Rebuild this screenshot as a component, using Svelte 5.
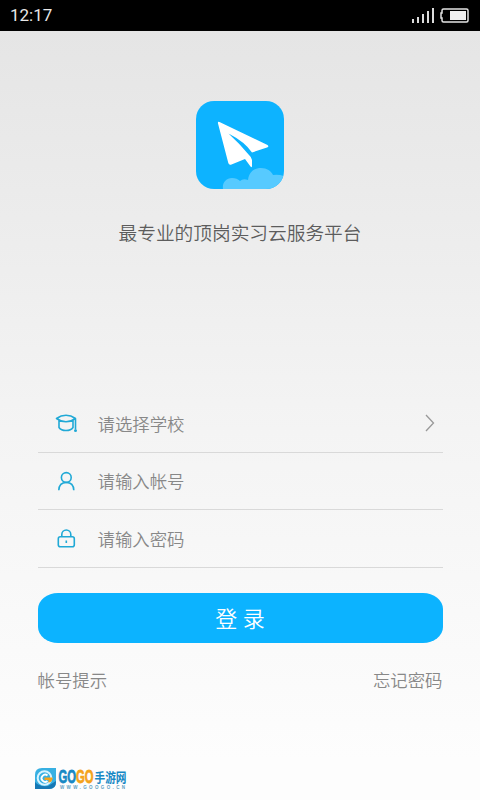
<script lang="ts">
  const signalBars = [4, 6, 9, 12, 15];

  // Login form rows
  const fields = [
    { id: 'school', hint: '请选择学校', arrow: true },
    { id: 'account', hint: '请输入帐号', arrow: false },
    { id: 'password', hint: '请输入密码', arrow: false }
  ];

  function login() {
    // Here you would send the credentials to the backend
    console.log('Login');
  }
</script>

<div class="screen">
  <header class="status-bar">
    <span class="clock">12:17</span>
    <div class="status-icons">
      <div class="signal">
        {#each signalBars as height}
          <i style="height: {height}px"></i>
        {/each}
      </div>
      <svg class="battery" width="29" height="15" viewBox="0 0 29 15">
        <path d="M3.5 1H26.5Q28 1 28 2.5V12.5Q28 14 26.5 14H3.5Q2 14 2 12.5V10H1V5H2V2.5Q2 1 3.5 1Z" fill="none" stroke="#e4e4e4" stroke-width="1.5" />
        <rect x="10" y="3" width="16" height="9" fill="#f0f0f0" />
      </svg>
    </div>
  </header>

  <main class="content">
    <svg class="app-logo" width="88" height="88" viewBox="0 0 88 88">
      <defs>
        <clipPath id="logo-clip"><rect width="88" height="88" rx="18" /></clipPath>
      </defs>
      <g clip-path="url(#logo-clip)">
        <rect width="88" height="88" fill="#0db3ff" />
        <path d="M27 88C26 82 30 77 36 77Q41 77 44 80Q47 77 52 79C53 71 58 67 65 67C71 67 75 70 77 74Q82 73 88 75V88Z" fill="#57caff" />
        <path d="M22 22.5Q21.5 20 23.5 21L71.500 44Q73.500 45.500 71 46.500L56 51.500Q49 41 32.500 32.500Q44 43 53 54Q55.500 56 56 59V65Q56 67 54.500 65.500L49 58L35.500 63.500Q33 64.500 32.300 62Z" fill="#fff" />
      </g>
    </svg>
    <p class="slogan">最专业的顶岗实习云服务平台</p>

    <div class="form">
      {#each fields as field}
        <div class="field">
          <svg class="field-icon" width="24" height="24" viewBox="0 0 24 24">
            {#if field.id === 'school'}
              <path d="M1.5 7.5Q6 4.3 11 4.3T20.5 7.5Q16 10.8 11 10.8T1.5 7.5ZM4 9.500V16.5Q6 19.500 11 19.500T18 16.5V9.500M20.500 8V18" />
              <circle class="dot" cx="20.500" cy="19.500" r="1.500" />
            {:else if field.id === 'account'}
              <circle cx="11.300" cy="8.500" r="4.900" />
              <path d="M3.800 21.200Q4.100 13.500 11.300 13.500T18.800 21.200" />
            {:else}
              <rect x="3.300" y="10.800" width="16" height="10" rx="2" />
              <path d="M6.800 10.800V8.500A4.500 4.500 0 0 1 15.800 8.500V10.800M11.300 14.500V17" />
            {/if}
          </svg>
          <span class="hint">{field.hint}</span>
          {#if field.arrow}
            <svg class="arrow" width="10" height="18" viewBox="0 0 10 18">
              <path d="M1 1L8.5 9L1 17" />
            </svg>
          {/if}
        </div>
      {/each}
    </div>

    <button class="login" on:click={login}>登 录</button>

    <div class="links">
      <span>帐号提示</span>
      <span>忘记密码</span>
    </div>
  </main>

  <footer class="brand">
    <svg width="96" height="24" viewBox="0 0 96 24">
      <path d="M8 1H22V15Q22 22 15 22H1V8Q1 1 8 1Z" fill="#38b0e2" />
      <path d="M1 15Q5 20 14 19L22 14V15Q22 22 15 22H1Z" fill="#1678b5" />
      <circle cx="10.500" cy="11" r="6.800" fill="none" stroke="#d8f3ff" stroke-width="2" />
      <path d="M13.500 8.500A3.600 3.600 0 1 0 13.500 14" fill="none" stroke="#fff" stroke-width="1.800" />
      <path d="M10.500 10.500H18.500V12Q17.500 15.500 14.500 15.500V13H10.500Z" fill="#f5a31a" />
      <text class="go" x="24.500" y="16" textLength="35" lengthAdjust="spacingAndGlyphs"><tspan class="blue">GO</tspan><tspan class="orange">GO</tspan></text>
      <text class="name" x="60.500" y="15" textLength="32" lengthAdjust="spacingAndGlyphs">手游网</text>
      <text class="url" x="26" y="22" textLength="65">WWW.GOOGO.CN</text>
    </svg>
  </footer>
</div>

<style>
  :global(body) {
    margin: 0;
  }

  .screen {
    display: flex;
    flex-direction: column;
    width: 480px;
    height: 800px;
    overflow: hidden;
    background: linear-gradient(#e5e5e5 31px, #f4f4f4 430px, #fdfdfd 760px);
    font-family: Roboto, "Noto Sans CJK SC", sans-serif;
    font-weight: 350;
  }

  .status-bar {
    display: flex;
    flex: none;
    align-items: center;
    justify-content: space-between;
    box-sizing: border-box;
    height: 31px;
    padding: 0 11px 0 10px;
    background: #000;
    color: #e8e8e8;
  }

  .clock {
    font-size: 17px;
    font-weight: 400;
    line-height: 31px;
  }

  .status-icons {
    display: flex;
    align-items: center;
    gap: 6px;
  }

  .signal {
    display: flex;
    align-items: flex-end;
    gap: 3px;
    height: 15px;
  }

  .signal i {
    width: 2px;
    background: #dcdcdc;
  }

  .content {
    display: flex;
    flex: 1;
    flex-direction: column;
    align-items: center;
    padding: 70px 37.5px 0;
  }

  .app-logo {
    flex: none;
  }

  .slogan {
    margin: 31px 0 0;
    color: #5c5c5c;
    font-size: 18.7px;
    line-height: 28px;
    white-space: nowrap;
  }

  .form {
    width: 100%;
    margin-top: 147px;
  }

  .field {
    display: flex;
    align-items: center;
    box-sizing: border-box;
    height: 57.5px;
    padding: 0 8px 0 17px;
    border-bottom: 1px solid #d9d9d9;
  }

  .field-icon {
    fill: none;
    stroke: #20a9d6;
    stroke-width: 1.6;
    stroke-linejoin: round;
  }

  .dot {
    fill: #20a9d6;
    stroke: none;
  }

  .hint {
    flex: 1;
    margin-left: 19px;
    color: #888;
    font-size: 17.4px;
  }

  .arrow {
    fill: none;
    stroke: #999;
    stroke-width: 1.3;
  }

  .login {
    width: 100%;
    height: 50px;
    margin-top: 25px;
    padding: 0 0 2px;
    border: 0;
    border-radius: 20px / 16px;
    background: #0cb3ff;
    color: #fff;
    font-family: inherit;
    font-size: 22px;
    font-weight: 350;
  }

  .links {
    display: flex;
    justify-content: space-between;
    width: 100%;
    margin-top: 25px;
    color: #888;
    font-size: 17.4px;
    line-height: 26px;
  }

  .brand {
    flex: none;
    height: 33px;
    padding-left: 34px;
  }

  .brand svg {
    overflow: visible;
  }

  .go,
  .name {
    font-family: "Liberation Sans", "Noto Sans CJK SC", sans-serif;
    font-weight: 700;
  }

  .go {
    font-size: 17.5px;
    stroke-width: 0.8;
  }

  .blue {
    fill: #1788c4;
    stroke: #1788c4;
  }

  .orange {
    fill: #f5a31a;
    stroke: #f5a31a;
  }

  .name {
    fill: #1788c4;
    font-size: 13px;
  }

  .url {
    fill: #5d9fc3;
    font-family: "Liberation Sans", sans-serif;
    font-size: 4.5px;
    font-weight: 700;
  }
</style>
